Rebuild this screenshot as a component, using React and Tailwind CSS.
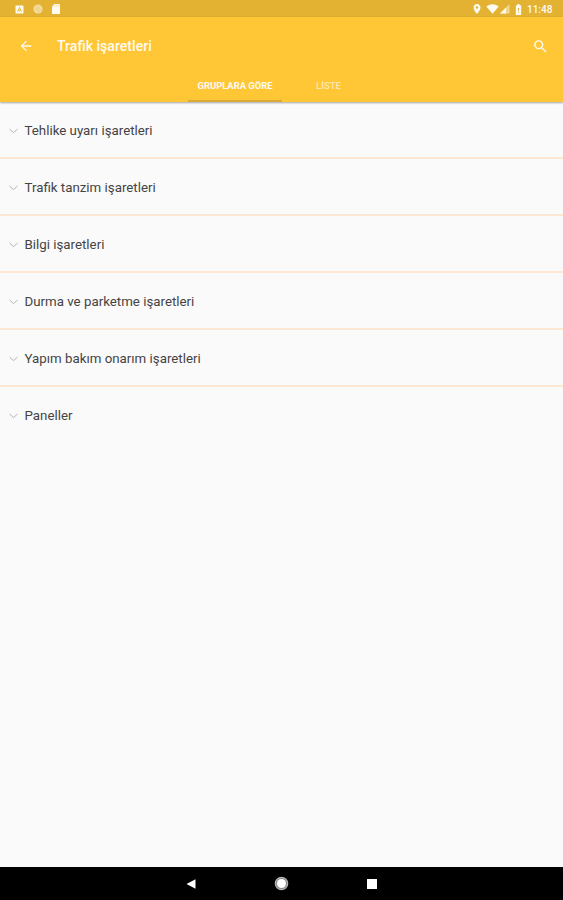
import React from "react";
import { MdArrowBack, MdSearch, MdLocationOn, MdBatteryAlert } from "react-icons/md";

const groups = [
  "Tehlike uyarı işaretleri",
  "Trafik tanzim işaretleri",
  "Bilgi işaretleri",
  "Durma ve parketme işaretleri",
  "Yapım bakım onarım işaretleri",
  "Paneller",
];

function StatusBar() {
  return (
    <div className="flex h-[17px] shrink-0 items-center bg-[#e3b233] pt-px text-[#fffaf0]">
      <svg className="ml-[15px] h-[9px] w-[9px]" viewBox="0 0 9 9">
        <rect x="0.5" y="0.5" width="8" height="8" rx="0.8" fill="currentColor" />
        <path d="M2.7 6.7 4.5 2.4 6.3 6.7M3.4 5.4h2.2" fill="none" stroke="#e3b233" strokeWidth="0.9" />
      </svg>
      <svg className="ml-[9px] h-[10px] w-[10px]" viewBox="0 0 10 10">
        <circle cx="5" cy="5" r="4.6" fill="#f4da9c" />
        <path d="M2 3.5 6.5 8M3.5 2 8 6.5" stroke="#e9c566" strokeWidth="0.8" />
      </svg>
      <svg className="ml-[8px] h-[10px] w-[10px]" viewBox="0 0 10 10">
        <path d="M3.4 0H8.2Q9 0 9 .8V9.2Q9 10 8.2 10H1.8Q1 10 1 9.2V2.6Z" fill="currentColor" />
        <path d="M4 1v1.6M5.7 1v1.6M7.4 1v1.6" stroke="#efd07a" strokeWidth="0.6" />
      </svg>
      <div className="ml-auto flex items-center">
        <MdLocationOn className="h-[12px] w-[12px]" />
        <svg className="ml-[3px] h-[10px] w-[13px]" viewBox="0 0 13 10">
          <path d="M0.3 2.4Q6.5-2 12.7 2.4L6.5 9.8Z" fill="currentColor" />
        </svg>
        <svg className="ml-[1px] h-[10px] w-[10px]" viewBox="0 0 10 10">
          <path d="M0 9.5H9.5V0Z" fill="#f2d58e" />
          <path d="M0 9.5H6V3.5Z" fill="currentColor" />
        </svg>
        <MdBatteryAlert className="ml-[2px] h-[13px] w-[13px]" />
        <span className="mr-[11px] ml-[2px] w-[25px] pt-px text-[10px] leading-none font-medium whitespace-nowrap">11:48</span>
      </div>
    </div>
  );
}

function Header() {
  return (
    <header className="relative z-10 flex h-[85px] shrink-0 flex-col bg-[#ffc735] text-[#fffaf0] shadow-[0_1px_2px_rgba(0,0,0,0.35)]">
      <div className="flex h-[58px] items-center">
        <MdArrowBack className="ml-[18px] h-4 w-4" />
        <h1 className="ml-[23px] text-[14.1px] leading-none font-medium">Trafik işaretleri</h1>
        <MdSearch className="mr-[14px] ml-auto h-[17px] w-[17px]" />
      </div>
      <nav className="flex h-[27px] pl-[188px] text-[9px] leading-none">
        <button className="w-[94px] border-b-2 border-[#d9a93a] pb-[3px] text-[9.4px] font-bold whitespace-nowrap">
          GRUPLARA GÖRE
        </button>
        <button className="w-[93px] pb-[5px] text-[9.6px] font-medium text-[#ffe7ab]">LİSTE</button>
      </nav>
    </header>
  );
}

export default function App() {
  return (
    <div className="flex h-[900px] w-[563px] flex-col overflow-hidden bg-[#fafafa] font-['Roboto',sans-serif]">
      <StatusBar />
      <Header />
      <main className="flex-1">
        {groups.map((name) => (
          <div
            key={name}
            className="flex h-[57px] items-center border-b-2 border-[#fde6d2] pt-[2px] text-[13.3px] text-[#444] last:border-transparent"
          >
            <svg className="ml-[9px] h-[6px] w-[9px]" viewBox="0 0 9 6">
              <path d="M0.5 1 4.5 4.6 8.5 1" fill="none" stroke="#ababab" strokeWidth="0.9" />
            </svg>
            <span className="ml-[6.5px] leading-none whitespace-nowrap">{name}</span>
          </div>
        ))}
      </main>
      <footer className="flex h-[33px] shrink-0 items-center bg-black text-white">
        <svg className="ml-[186px] h-[10px] w-[10px]" viewBox="0 0 10 10">
          <path d="M0.5 5 9.5 0.3V9.7Z" fill="#fff" />
        </svg>
        <svg className="ml-[78px] h-[15px] w-[15px]" viewBox="0 0 15 15">
          <circle cx="7.5" cy="7.5" r="6.2" fill="#8a8a8a" stroke="#b4b4b4" strokeWidth="1.2" />
          <circle cx="7.5" cy="7.5" r="4.5" fill="#fff" />
        </svg>
        <div className="ml-[78px] h-[10px] w-[10px] bg-white" />
      </footer>
    </div>
  );
}
